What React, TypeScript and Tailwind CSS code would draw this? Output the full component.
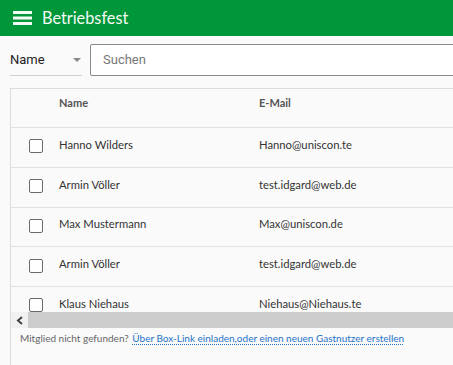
import React from "react";

const rows = [
  { name: "Hanno Wilders", email: "Hanno@uniscon.te" },
  { name: "Armin Völler", email: "test.idgard@web.de" },
  { name: "Max Mustermann", email: "Max@uniscon.de" },
  { name: "Armin Völler", email: "test.idgard@web.de" },
  { name: "Klaus Niehaus", email: "Niehaus@Niehaus.te" },
];

export default function App() {
  return (
    <div
      className="w-[453px] h-[365px] overflow-hidden bg-[#fafafa] flex flex-col"
      style={{ fontFamily: "Lato, 'Open Sans', sans-serif" }}
    >
      <div className="h-[36px] bg-[#00963a] flex items-center pl-[13px] shrink-0">
        <svg width="19" height="14" viewBox="0 0 19 14" className="mr-[10px]">
          <rect x="0" y="0" width="19" height="3" fill="#f2fbf4" />
          <rect x="0" y="5.5" width="19" height="3" fill="#f2fbf4" />
          <rect x="0" y="11" width="19" height="3" fill="#f2fbf4" />
        </svg>
        <span className="text-[16.3px] text-[#f4fbf5] leading-none">Betriebsfest</span>
      </div>

      <div className="flex items-start pt-[8px] pl-[10px] shrink-0">
        <div
          className="w-[72px] shrink-0 h-[32px] border-b border-[#cfcfcf] flex items-center justify-between"
          style={{ fontFamily: "Roboto, sans-serif" }}
        >
          <span className="text-[13px] text-[#222]">Name</span>
          <span className="w-0 h-0 border-l-[4px] border-r-[4px] border-t-[4px] border-l-transparent border-r-transparent border-t-[#888] mr-[1px]" />
        </div>
        <div
          className="ml-[8px] w-[380px] shrink-0 h-[32px] border border-[#8a8a8a] rounded-[2px] bg-white flex items-center pl-[12px]"
          style={{ fontFamily: "Roboto, sans-serif" }}
        >
          <span className="text-[13px] text-[#777]">Suchen</span>
        </div>
      </div>

      <div className="mt-[12px] ml-[10px] flex-1 border-t border-l border-[#dcdcdc] flex flex-col">
        <div className="h-[223px] overflow-hidden">
          <div className="h-[39px] border-b border-[#e2e2e2] flex text-[11px] font-bold text-[#555] pt-[6px]">
            <div className="w-[48px]" />
            <div className="w-[200px]">Name</div>
            <div>E-Mail</div>
          </div>
          {rows.map((r, i) => (
            <div
              key={i}
              className="h-[39.75px] border-b border-[#e2e2e2] flex items-center text-[11.25px] text-[#333] pb-[4px]"
            >
              <div className="w-[48px] flex justify-start pl-[18px] pt-[2px]">
                <div className="w-[14px] h-[14px] border border-[#6a6a6a] rounded-[2px] bg-white" />
              </div>
              <div className="w-[200px]">{r.name}</div>
              <div>{r.email}</div>
            </div>
          ))}
        </div>
        <div className="h-[16px] flex shrink-0">
          <div className="w-[17px] flex items-center justify-center bg-[#f1f1f1]">
            <svg width="8" height="9" viewBox="0 0 8 9">
              <path d="M6 1 L2 4.5 L6 8" stroke="#444" strokeWidth="2" fill="none" />
            </svg>
          </div>
          <div className="flex-1 bg-[#cdcdcd]" />
        </div>
        <div className="pl-[9px] pt-[3px] text-[10px] text-[#666]">
          Mitglied nicht gefunden?{" "}
          <span className="text-[#1f74c8] underline decoration-dotted underline-offset-2 ml-[1px]">
            Über Box-Link einladen,oder einen neuen Gastnutzer erstellen
          </span>
        </div>
      </div>
    </div>
  );
}
